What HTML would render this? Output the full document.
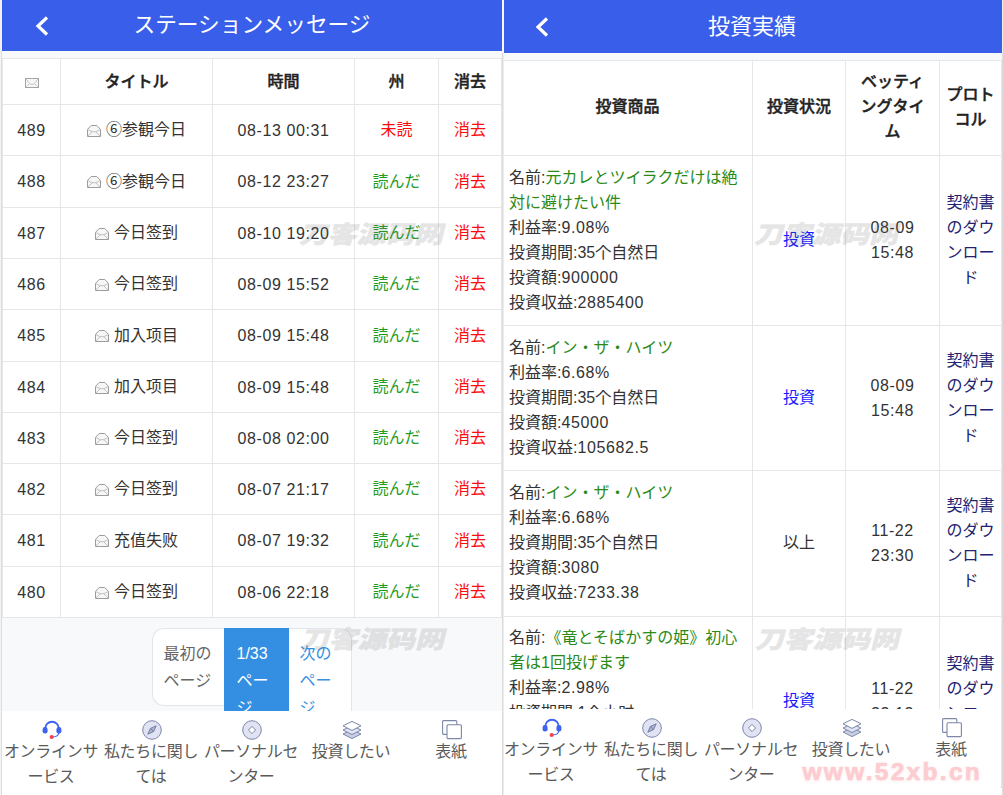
<!DOCTYPE html>
<html lang="ja"><head><meta charset="utf-8"><title>ステーションメッセージ</title>
<style>
*{box-sizing:border-box;margin:0;padding:0}
html,body{width:1003px;height:795px;overflow:hidden;background:#fff}
body{font-family:"Liberation Sans","Noto Sans CJK JP",sans-serif;font-size:16px;color:#333;position:relative}
.gap{position:absolute;left:502px;top:51px;width:2px;height:744px;background:linear-gradient(90deg,#dcdcdc 0,#dcdcdc 70%,#ececec 70%)}
.gap0{position:absolute;left:502px;top:0;width:2px;height:53px;background:#fbf6e8}
.rstrip{position:absolute;left:1002px;top:53px;width:1px;height:742px;background:#dcdcdc}
.rstrip0{position:absolute;left:1002px;top:0;width:1px;height:53px;background:#f3eee0}
.lstrip{position:absolute;left:0;top:0;width:2px;height:795px;background:linear-gradient(90deg,#f3f3f3 0,#f3f3f3 50%,#dedede 50%)}
.lstrip0{position:absolute;left:1px;top:0;width:1px;height:51px;background:#f3efe2}
.panel{position:absolute;top:0;height:795px;background:#f8f9fb;overflow:hidden}
#L{left:2px;width:500px}
#R{left:504px;width:498px}
.hd{position:absolute;left:0;top:0;width:100%;background:#395fea;color:#fff;text-align:center;font-size:21px}
#L .hd{height:51px;line-height:49.5px;font-size:21.7px}
#R .hd{height:53px;line-height:54px;font-size:22px;padding-right:2px}
.back{position:absolute;left:32px;top:14.5px}
.cell{position:absolute;display:flex;align-items:center;justify-content:center;text-align:center;border-right:1px solid #e6e6e6;border-bottom:1px solid #e6e6e6;background:#fff}
.th{font-weight:500;-webkit-text-stroke:.4px #222;color:#222}
.tb{position:absolute;background:#fff;border-top:1px solid #e6e6e6;border-left:1px solid #e6e6e6}
.red{color:#fb0d0d}.grn{color:#1f9d1f}
.eo{margin-right:5px;position:relative;top:2.5px;left:0}
.ec{position:relative;left:0.5px;top:3.5px}
.n{letter-spacing:.6px}
.cell.n{padding-top:1px}
.cj{padding-bottom:4px}
.lh{padding-bottom:4px}
.cj2{padding-bottom:5.5px}
.cj3{padding-bottom:1px}
.dt{padding-bottom:1.5px}
#R .th{padding-bottom:2.5px}
#R .nav{left:-2px;top:709px;height:86px}
.pg div{position:absolute;top:628px;line-height:27.4px;padding-top:10.5px;font-size:16px;text-align:left;background:#fff;border:1px solid #e1e5ec}
.nav{position:absolute;left:0;top:711px;width:100%;height:84px;background:#fff;display:flex}
.ni{width:100px;flex:none;text-align:center;color:#5a5a5a}
.ic{height:20px;margin-top:9px}
#R .ic{margin-top:9px}
#R .nl{line-height:24.6px;margin-top:0.35px}
.nl{position:relative;left:-1px;line-height:25.2px;font-size:16px;margin-top:-1.5px;padding:0;word-break:break-all;letter-spacing:-0.3px}
.wm{position:absolute;font-family:"Liberation Sans","Noto Sans CJK SC",sans-serif;font-weight:900;font-size:24px;line-height:1;color:#66666c;-webkit-text-stroke:0.5px #66666c;opacity:.165;white-space:nowrap;transform-origin:0 0;transform:scaleX(1.2) skewX(-12deg);pointer-events:none}
.url{position:absolute;left:802.5px;top:759.5px;font-weight:bold;font-size:24.5px;line-height:1;letter-spacing:2.3px;color:#f54655;-webkit-text-stroke:.7px #f54655;opacity:.27;text-shadow:0 1px 3px rgba(245,85,95,.5);white-space:nowrap}
.info{text-align:left;display:block !important;padding:8.5px 6px 0 6px;line-height:25px;font-size:16px}
.info .g{color:#2b8a16}
a.b{color:#1a1aff}
.dl{color:#222270}
</style></head><body>
<div class="lstrip"></div><div class="lstrip0"></div>
<div class="panel" id="L">
<div class="hd"><svg class="back" viewBox="0 0 16 22" width="16" height="22"><path d="M13 2.5 L4 11 L13 19.5" fill="none" stroke="#fff" stroke-width="3.2"/></svg>ステーションメッセージ</div>
<div class="tb" style="left:0;top:58.00px;width:500.00px;height:560.00px"></div>
<div class="cell th lh" style="left:1.00px;top:59.00px;width:58.00px;height:46.00px"><svg class="ec" viewBox="0 0 14 10" width="14" height="10"><rect x="0.5" y="0.5" width="13" height="9" fill="#f7f7f7" stroke="#a4a4a4" stroke-width="1"/><path d="M1 1 L5.2 6.3 H8.8 L13 1 M1.2 8.8 L4.6 5.6 M12.8 8.8 L9.4 5.6" fill="none" stroke="#c4c4c4" stroke-width="0.9"/></svg></div>
<div class="cell th lh" style="left:59.00px;top:59.00px;width:152.00px;height:46.00px">タイトル</div>
<div class="cell th lh" style="left:211.00px;top:59.00px;width:142.00px;height:46.00px">時間</div>
<div class="cell th lh" style="left:353.00px;top:59.00px;width:84.00px;height:46.00px">州</div>
<div class="cell th lh" style="left:437.00px;top:59.00px;width:63.00px;height:46.00px">消去</div>
<div class="cell n" style="left:1.00px;top:105.00px;width:58.00px;height:51.00px">489</div>
<div class="cell cj" style="left:59.00px;top:105.00px;width:152.00px;height:51.00px"><svg class="eo" viewBox="0 0 14 12" width="14" height="12"><path d="M0.5 4.4 L4.2 0.5 H9.8 L13.5 4.4 V11.5 H0.5 Z" fill="#f7f7f7" stroke="#9c9c9c" stroke-width="1"/><path d="M0.6 4.5 L5.2 6.7 H8.8 L13.4 4.5 M5.2 6.7 L1 11 M8.8 6.7 L13 11" fill="none" stroke="#b4b4b4" stroke-width="0.8"/></svg><span>⑥参観今日</span></div>
<div class="cell n" style="left:211.00px;top:105.00px;width:142.00px;height:51.00px">08-13 00:31</div>
<div class="cell cj" style="left:353.00px;top:105.00px;width:84.00px;height:51.00px"><span class="red">未読</span></div>
<div class="cell cj" style="left:437.00px;top:105.00px;width:63.00px;height:51.00px"><span class="red">消去</span></div>
<div class="cell n" style="left:1.00px;top:156.00px;width:58.00px;height:52.00px">488</div>
<div class="cell cj" style="left:59.00px;top:156.00px;width:152.00px;height:52.00px"><svg class="eo" viewBox="0 0 14 12" width="14" height="12"><path d="M0.5 4.4 L4.2 0.5 H9.8 L13.5 4.4 V11.5 H0.5 Z" fill="#f7f7f7" stroke="#9c9c9c" stroke-width="1"/><path d="M0.6 4.5 L5.2 6.7 H8.8 L13.4 4.5 M5.2 6.7 L1 11 M8.8 6.7 L13 11" fill="none" stroke="#b4b4b4" stroke-width="0.8"/></svg><span>⑥参観今日</span></div>
<div class="cell n" style="left:211.00px;top:156.00px;width:142.00px;height:52.00px">08-12 23:27</div>
<div class="cell cj" style="left:353.00px;top:156.00px;width:84.00px;height:52.00px"><span class="grn">読んだ</span></div>
<div class="cell cj" style="left:437.00px;top:156.00px;width:63.00px;height:52.00px"><span class="red">消去</span></div>
<div class="cell n" style="left:1.00px;top:208.00px;width:58.00px;height:51.00px">487</div>
<div class="cell cj" style="left:59.00px;top:208.00px;width:152.00px;height:51.00px"><svg class="eo" viewBox="0 0 14 12" width="14" height="12"><path d="M0.5 4.4 L4.2 0.5 H9.8 L13.5 4.4 V11.5 H0.5 Z" fill="#f7f7f7" stroke="#9c9c9c" stroke-width="1"/><path d="M0.6 4.5 L5.2 6.7 H8.8 L13.4 4.5 M5.2 6.7 L1 11 M8.8 6.7 L13 11" fill="none" stroke="#b4b4b4" stroke-width="0.8"/></svg><span>今日签到</span></div>
<div class="cell n" style="left:211.00px;top:208.00px;width:142.00px;height:51.00px">08-10 19:20</div>
<div class="cell cj" style="left:353.00px;top:208.00px;width:84.00px;height:51.00px"><span class="grn">読んだ</span></div>
<div class="cell cj" style="left:437.00px;top:208.00px;width:63.00px;height:51.00px"><span class="red">消去</span></div>
<div class="cell n" style="left:1.00px;top:259.00px;width:58.00px;height:51.00px">486</div>
<div class="cell cj" style="left:59.00px;top:259.00px;width:152.00px;height:51.00px"><svg class="eo" viewBox="0 0 14 12" width="14" height="12"><path d="M0.5 4.4 L4.2 0.5 H9.8 L13.5 4.4 V11.5 H0.5 Z" fill="#f7f7f7" stroke="#9c9c9c" stroke-width="1"/><path d="M0.6 4.5 L5.2 6.7 H8.8 L13.4 4.5 M5.2 6.7 L1 11 M8.8 6.7 L13 11" fill="none" stroke="#b4b4b4" stroke-width="0.8"/></svg><span>今日签到</span></div>
<div class="cell n" style="left:211.00px;top:259.00px;width:142.00px;height:51.00px">08-09 15:52</div>
<div class="cell cj" style="left:353.00px;top:259.00px;width:84.00px;height:51.00px"><span class="grn">読んだ</span></div>
<div class="cell cj" style="left:437.00px;top:259.00px;width:63.00px;height:51.00px"><span class="red">消去</span></div>
<div class="cell n" style="left:1.00px;top:310.00px;width:58.00px;height:52.00px">485</div>
<div class="cell cj" style="left:59.00px;top:310.00px;width:152.00px;height:52.00px"><svg class="eo" viewBox="0 0 14 12" width="14" height="12"><path d="M0.5 4.4 L4.2 0.5 H9.8 L13.5 4.4 V11.5 H0.5 Z" fill="#f7f7f7" stroke="#9c9c9c" stroke-width="1"/><path d="M0.6 4.5 L5.2 6.7 H8.8 L13.4 4.5 M5.2 6.7 L1 11 M8.8 6.7 L13 11" fill="none" stroke="#b4b4b4" stroke-width="0.8"/></svg><span>加入项目</span></div>
<div class="cell n" style="left:211.00px;top:310.00px;width:142.00px;height:52.00px">08-09 15:48</div>
<div class="cell cj" style="left:353.00px;top:310.00px;width:84.00px;height:52.00px"><span class="grn">読んだ</span></div>
<div class="cell cj" style="left:437.00px;top:310.00px;width:63.00px;height:52.00px"><span class="red">消去</span></div>
<div class="cell n" style="left:1.00px;top:362.00px;width:58.00px;height:51.00px">484</div>
<div class="cell cj" style="left:59.00px;top:362.00px;width:152.00px;height:51.00px"><svg class="eo" viewBox="0 0 14 12" width="14" height="12"><path d="M0.5 4.4 L4.2 0.5 H9.8 L13.5 4.4 V11.5 H0.5 Z" fill="#f7f7f7" stroke="#9c9c9c" stroke-width="1"/><path d="M0.6 4.5 L5.2 6.7 H8.8 L13.4 4.5 M5.2 6.7 L1 11 M8.8 6.7 L13 11" fill="none" stroke="#b4b4b4" stroke-width="0.8"/></svg><span>加入项目</span></div>
<div class="cell n" style="left:211.00px;top:362.00px;width:142.00px;height:51.00px">08-09 15:48</div>
<div class="cell cj" style="left:353.00px;top:362.00px;width:84.00px;height:51.00px"><span class="grn">読んだ</span></div>
<div class="cell cj" style="left:437.00px;top:362.00px;width:63.00px;height:51.00px"><span class="red">消去</span></div>
<div class="cell n" style="left:1.00px;top:413.00px;width:58.00px;height:51.00px">483</div>
<div class="cell cj" style="left:59.00px;top:413.00px;width:152.00px;height:51.00px"><svg class="eo" viewBox="0 0 14 12" width="14" height="12"><path d="M0.5 4.4 L4.2 0.5 H9.8 L13.5 4.4 V11.5 H0.5 Z" fill="#f7f7f7" stroke="#9c9c9c" stroke-width="1"/><path d="M0.6 4.5 L5.2 6.7 H8.8 L13.4 4.5 M5.2 6.7 L1 11 M8.8 6.7 L13 11" fill="none" stroke="#b4b4b4" stroke-width="0.8"/></svg><span>今日签到</span></div>
<div class="cell n" style="left:211.00px;top:413.00px;width:142.00px;height:51.00px">08-08 02:00</div>
<div class="cell cj" style="left:353.00px;top:413.00px;width:84.00px;height:51.00px"><span class="grn">読んだ</span></div>
<div class="cell cj" style="left:437.00px;top:413.00px;width:63.00px;height:51.00px"><span class="red">消去</span></div>
<div class="cell n" style="left:1.00px;top:464.00px;width:58.00px;height:51.00px">482</div>
<div class="cell cj" style="left:59.00px;top:464.00px;width:152.00px;height:51.00px"><svg class="eo" viewBox="0 0 14 12" width="14" height="12"><path d="M0.5 4.4 L4.2 0.5 H9.8 L13.5 4.4 V11.5 H0.5 Z" fill="#f7f7f7" stroke="#9c9c9c" stroke-width="1"/><path d="M0.6 4.5 L5.2 6.7 H8.8 L13.4 4.5 M5.2 6.7 L1 11 M8.8 6.7 L13 11" fill="none" stroke="#b4b4b4" stroke-width="0.8"/></svg><span>今日签到</span></div>
<div class="cell n" style="left:211.00px;top:464.00px;width:142.00px;height:51.00px">08-07 21:17</div>
<div class="cell cj" style="left:353.00px;top:464.00px;width:84.00px;height:51.00px"><span class="grn">読んだ</span></div>
<div class="cell cj" style="left:437.00px;top:464.00px;width:63.00px;height:51.00px"><span class="red">消去</span></div>
<div class="cell n" style="left:1.00px;top:515.00px;width:58.00px;height:52.00px">481</div>
<div class="cell cj" style="left:59.00px;top:515.00px;width:152.00px;height:52.00px"><svg class="eo" viewBox="0 0 14 12" width="14" height="12"><path d="M0.5 4.4 L4.2 0.5 H9.8 L13.5 4.4 V11.5 H0.5 Z" fill="#f7f7f7" stroke="#9c9c9c" stroke-width="1"/><path d="M0.6 4.5 L5.2 6.7 H8.8 L13.4 4.5 M5.2 6.7 L1 11 M8.8 6.7 L13 11" fill="none" stroke="#b4b4b4" stroke-width="0.8"/></svg><span>充值失败</span></div>
<div class="cell n" style="left:211.00px;top:515.00px;width:142.00px;height:52.00px">08-07 19:32</div>
<div class="cell cj" style="left:353.00px;top:515.00px;width:84.00px;height:52.00px"><span class="grn">読んだ</span></div>
<div class="cell cj" style="left:437.00px;top:515.00px;width:63.00px;height:52.00px"><span class="red">消去</span></div>
<div class="cell n" style="left:1.00px;top:567.00px;width:58.00px;height:51.00px">480</div>
<div class="cell cj" style="left:59.00px;top:567.00px;width:152.00px;height:51.00px"><svg class="eo" viewBox="0 0 14 12" width="14" height="12"><path d="M0.5 4.4 L4.2 0.5 H9.8 L13.5 4.4 V11.5 H0.5 Z" fill="#f7f7f7" stroke="#9c9c9c" stroke-width="1"/><path d="M0.6 4.5 L5.2 6.7 H8.8 L13.4 4.5 M5.2 6.7 L1 11 M8.8 6.7 L13 11" fill="none" stroke="#b4b4b4" stroke-width="0.8"/></svg><span>今日签到</span></div>
<div class="cell n" style="left:211.00px;top:567.00px;width:142.00px;height:51.00px">08-06 22:18</div>
<div class="cell cj" style="left:353.00px;top:567.00px;width:84.00px;height:51.00px"><span class="grn">読んだ</span></div>
<div class="cell cj" style="left:437.00px;top:567.00px;width:63.00px;height:51.00px"><span class="red">消去</span></div>
<div class="pg"><div style="left:150px;width:73px;height:78px;padding-left:10.5px;color:#666;border-radius:12px 0 0 12px;border-right:0">最初の<br>ページ</div><div style="left:222px;width:65px;height:105px;background:#348fe2;border-color:#348fe2;color:#fff;padding-left:11.5px;padding-right:11.5px">1/33 ページ</div><div style="left:287px;width:63px;height:105px;color:#348fe2;padding-left:10.5px;padding-right:10.5px;border-radius:0 12px 12px 0;border-left:0">次のページ</div></div>
<div class="wm" style="left:301.5px;top:223px">刀客源码网</div>
<div class="wm" style="left:302.5px;top:628px">刀客源码网</div>
<div class="nav"><div class="ni"><div class="ic"><svg viewBox="0 0 20 20" width="20" height="20"><path d="M3.3 9 V8.4 A6.7 6.7 0 0 1 16.7 8.4 V9" fill="none" stroke="#3d63f0" stroke-width="1.9"/><rect x="0.6" y="7" width="5" height="6.6" rx="2.4" fill="#3d63f0"/><rect x="14.4" y="7" width="5" height="6.6" rx="2.4" fill="#3d63f0"/><path d="M16.8 13 Q16.2 16.6 11 17" fill="none" stroke="#3d63f0" stroke-width="1.2"/><circle cx="9.7" cy="17" r="2.1" fill="#f2414f"/></svg></div><div class="nl">オンラインサービス</div></div><div class="ni"><div class="ic"><svg viewBox="0 0 20 20" width="20" height="20"><circle cx="10" cy="10" r="9.3" fill="#dfe3f3" stroke="#7c86a8" stroke-width="1"/><path d="M14.2 5.8 L11.6 11.6 L5.8 14.2 L8.4 8.4 Z" fill="#aab1cf" stroke="#6f7a9f" stroke-width="0.9"/><path d="M8.4 8.4 L11.6 11.6" stroke="#6f7a9f" stroke-width="0.9"/></svg></div><div class="nl">私たちに関しては</div></div><div class="ni"><div class="ic"><svg viewBox="0 0 20 20" width="20" height="20"><circle cx="10" cy="10" r="9.3" fill="#dfe3f3" stroke="#7c86a8" stroke-width="1"/><path d="M10 6.4 L13.6 10 L10 13.6 L6.4 10 Z" fill="#fff" stroke="#7c86a8" stroke-width="1"/></svg></div><div class="nl">パーソナルセンター</div></div><div class="ni"><div class="ic"><svg viewBox="0 0 20 20" width="20" height="20"><path d="M10 9.6 L19 14 L10 18.6 L1 14 Z" fill="#c9cfe2" stroke="#7c86a8" stroke-width="1" stroke-linejoin="round"/><path d="M10 5.6 L19 10 L10 14.6 L1 10 Z" fill="#dfe3f3" stroke="#7c86a8" stroke-width="1" stroke-linejoin="round"/><path d="M10 1.4 L19 5.8 L10 10.4 L1 5.8 Z" fill="#fff" stroke="#7c86a8" stroke-width="1" stroke-linejoin="round"/></svg></div><div class="nl">投資したい</div></div><div class="ni"><div class="ic"><svg viewBox="0 0 20 20" width="20" height="20"><rect x="0.6" y="0.6" width="14.2" height="13.8" rx="1" fill="#fff" stroke="#7c86a8" stroke-width="1.1"/><rect x="5" y="4.8" width="14.4" height="13.8" rx="1" fill="#fff" stroke="#7c86a8" stroke-width="1.1"/></svg></div><div class="nl">表紙</div></div></div></div>
<div class="panel" id="R">
<div class="hd"><svg class="back" style="left:30px;top:16px" viewBox="0 0 16 22" width="16" height="22"><path d="M13 2.5 L4 11 L13 19.5" fill="none" stroke="#fff" stroke-width="3.2"/></svg>投資実績</div>
<div class="tb" style="left:-1px;top:60.00px;width:499.00px;height:740px"></div>
<div class="cell th" style="left:-1.00px;top:61.00px;width:250.00px;height:95.20px"><span style="line-height:25px;display:block;padding:0 0px">投資商品</span></div>
<div class="cell th" style="left:249.00px;top:61.00px;width:93.00px;height:95.20px"><span style="line-height:25px;display:block;padding:0 0px">投資状況</span></div>
<div class="cell th" style="left:342.00px;top:61.00px;width:94.00px;height:95.20px"><span style="line-height:25px;display:block;padding:0 12px">ベッティングタイム</span></div>
<div class="cell th" style="left:436.00px;top:61.00px;width:62.00px;height:95.20px"><span style="line-height:25px;display:block;padding:0 6px">プロトコル</span></div>
<div class="cell info" style="left:-1.00px;top:156.20px;width:250.00px;height:170.00px">名前:<span class="g">元カレとツイラクだけは絶対に避けたい件</span><br>利益率:<span class="n">9.08%</span><br>投資期間:35个自然日<br>投資額:<span class="n">900000</span><br>投資収益:<span class="n">2885400</span></div>
<div class="cell cj2" style="left:249.00px;top:156.20px;width:93.00px;height:170.00px"><a class="b">投資</a></div>
<div class="cell dt" style="left:342.00px;top:156.20px;width:94.00px;height:170.00px"><span class="n" style="line-height:25px">08-09<br>15:48</span></div>
<div class="cell cj3" style="left:436.00px;top:156.20px;width:62.00px;height:170.00px"><span class="dl" style="line-height:25px;display:block;padding:0 6px;word-break:break-all">契約書のダウンロード</span></div>
<div class="cell info" style="left:-1.00px;top:326.20px;width:250.00px;height:145.20px">名前:<span class="g">イン・ザ・ハイツ</span><br>利益率:<span class="n">6.68%</span><br>投資期間:35个自然日<br>投資額:<span class="n">45000</span><br>投資収益:<span class="n">105682.5</span></div>
<div class="cell cj2" style="left:249.00px;top:326.20px;width:93.00px;height:145.20px"><a class="b">投資</a></div>
<div class="cell dt" style="left:342.00px;top:326.20px;width:94.00px;height:145.20px"><span class="n" style="line-height:25px">08-09<br>15:48</span></div>
<div class="cell cj3" style="left:436.00px;top:326.20px;width:62.00px;height:145.20px"><span class="dl" style="line-height:25px;display:block;padding:0 6px;word-break:break-all">契約書のダウンロード</span></div>
<div class="cell info" style="left:-1.00px;top:471.40px;width:250.00px;height:145.50px">名前:<span class="g">イン・ザ・ハイツ</span><br>利益率:<span class="n">6.68%</span><br>投資期間:35个自然日<br>投資額:<span class="n">3080</span><br>投資収益:<span class="n">7233.38</span></div>
<div class="cell cj2" style="left:249.00px;top:471.40px;width:93.00px;height:145.50px">以上</div>
<div class="cell dt" style="left:342.00px;top:471.40px;width:94.00px;height:145.50px"><span class="n" style="line-height:25px">11-22<br>23:30</span></div>
<div class="cell cj3" style="left:436.00px;top:471.40px;width:62.00px;height:145.50px"><span class="dl" style="line-height:25px;display:block;padding:0 6px;word-break:break-all">契約書のダウンロード</span></div>
<div class="cell info" style="left:-1.00px;top:616.90px;width:250.00px;height:171.00px">名前:<span class="g">《竜とそばかすの姫》初心者は1回投げます</span><br>利益率:<span class="n">2.98%</span><br>投資期間:1个小时<br>投資額:<span class="n">1000</span><br>投資収益:<span class="n">1000.83</span></div>
<div class="cell cj2" style="left:249.00px;top:616.90px;width:93.00px;height:171.00px"><a class="b">投資</a></div>
<div class="cell dt" style="left:342.00px;top:616.90px;width:94.00px;height:171.00px"><span class="n" style="line-height:25px">11-22<br>23:13</span></div>
<div class="cell cj3" style="left:436.00px;top:616.90px;width:62.00px;height:171.00px"><span class="dl" style="line-height:25px;display:block;padding:0 6px;word-break:break-all">契約書のダウンロード</span></div>
<div class="wm" style="left:255px;top:223px">刀客源码网</div>
<div class="wm" style="left:256px;top:628px">刀客源码网</div>
<div class="nav"><div class="ni"><div class="ic"><svg viewBox="0 0 20 20" width="20" height="20"><path d="M3.3 9 V8.4 A6.7 6.7 0 0 1 16.7 8.4 V9" fill="none" stroke="#3d63f0" stroke-width="1.9"/><rect x="0.6" y="7" width="5" height="6.6" rx="2.4" fill="#3d63f0"/><rect x="14.4" y="7" width="5" height="6.6" rx="2.4" fill="#3d63f0"/><path d="M16.8 13 Q16.2 16.6 11 17" fill="none" stroke="#3d63f0" stroke-width="1.2"/><circle cx="9.7" cy="17" r="2.1" fill="#f2414f"/></svg></div><div class="nl">オンラインサービス</div></div><div class="ni"><div class="ic"><svg viewBox="0 0 20 20" width="20" height="20"><circle cx="10" cy="10" r="9.3" fill="#dfe3f3" stroke="#7c86a8" stroke-width="1"/><path d="M14.2 5.8 L11.6 11.6 L5.8 14.2 L8.4 8.4 Z" fill="#aab1cf" stroke="#6f7a9f" stroke-width="0.9"/><path d="M8.4 8.4 L11.6 11.6" stroke="#6f7a9f" stroke-width="0.9"/></svg></div><div class="nl">私たちに関しては</div></div><div class="ni"><div class="ic"><svg viewBox="0 0 20 20" width="20" height="20"><circle cx="10" cy="10" r="9.3" fill="#dfe3f3" stroke="#7c86a8" stroke-width="1"/><path d="M10 6.4 L13.6 10 L10 13.6 L6.4 10 Z" fill="#fff" stroke="#7c86a8" stroke-width="1"/></svg></div><div class="nl">パーソナルセンター</div></div><div class="ni"><div class="ic"><svg viewBox="0 0 20 20" width="20" height="20"><path d="M10 9.6 L19 14 L10 18.6 L1 14 Z" fill="#c9cfe2" stroke="#7c86a8" stroke-width="1" stroke-linejoin="round"/><path d="M10 5.6 L19 10 L10 14.6 L1 10 Z" fill="#dfe3f3" stroke="#7c86a8" stroke-width="1" stroke-linejoin="round"/><path d="M10 1.4 L19 5.8 L10 10.4 L1 5.8 Z" fill="#fff" stroke="#7c86a8" stroke-width="1" stroke-linejoin="round"/></svg></div><div class="nl">投資したい</div></div><div class="ni"><div class="ic"><svg viewBox="0 0 20 20" width="20" height="20"><rect x="0.6" y="0.6" width="14.2" height="13.8" rx="1" fill="#fff" stroke="#7c86a8" stroke-width="1.1"/><rect x="5" y="4.8" width="14.4" height="13.8" rx="1" fill="#fff" stroke="#7c86a8" stroke-width="1.1"/></svg></div><div class="nl">表紙</div></div></div></div>
<div class="gap"></div><div class="gap0"></div><div class="rstrip"></div><div class="rstrip0"></div>
<div class="url">www.52xb.cn</div>
</body></html>
